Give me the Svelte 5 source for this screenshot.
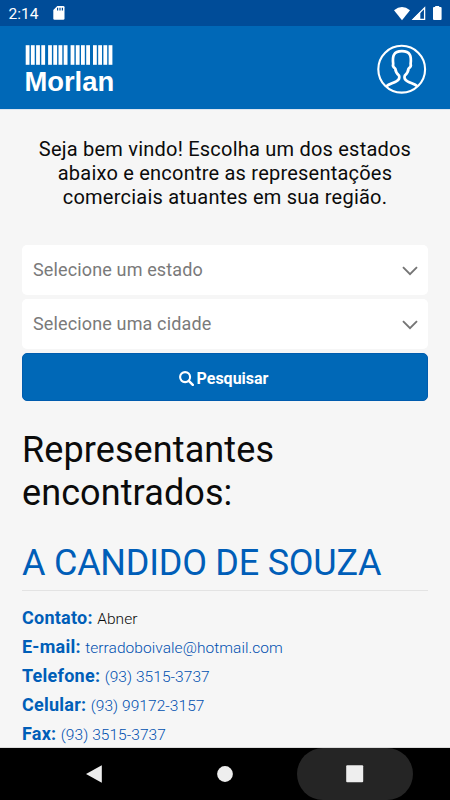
<script>
  const selects = ['Selecione um estado', 'Selecione uma cidade'];

  const barGroups = [25.7, 48.1, 70.6, 93];
  const bars = [0, 5.2, 10.4, 15.6];

  const representative = {
    name: 'A CANDIDO DE SOUZA',
    fields: [
      { label: 'Contato', value: 'Abner' },
      { label: 'E-mail', value: 'terradoboivale@hotmail.com', href: 'mailto:terradoboivale@hotmail.com' },
      { label: 'Telefone', value: '(93) 3515-3737', href: 'tel:9335153737' },
      { label: 'Celular', value: '(93) 99172-3157', href: 'tel:93991723157' },
      { label: 'Fax', value: '(93) 3515-3737', href: 'tel:9335153737' },
    ],
  };
</script>

<div class="screen">
  <div class="status-bar">
    <span class="time">2:14</span>
    <svg class="sd-card" width="12" height="14" viewBox="0 0 12 14">
      <path d="M4.3 0H10.2Q11.5 0 11.5 1.3V12.5Q11.5 13.8 10.2 13.8H1.6Q.3 13.8 .3 12.5V4Z" fill="#fff" />
      <path d="M4.6 1.7V4.4M7 1.7V4.4M9.4 1.7V4.4" stroke="#004c98" stroke-width="1.2" />
    </svg>
    <svg class="signals" width="50" height="16" viewBox="0 0 50 16">
      <path d="M0 4.2Q8 -2.4 16 4.2L8 14.2Z" fill="#fff" />
      <path d="M30.6 1.8V13.4H19.2Z" fill="none" stroke="#fff" stroke-width="1.3" />
      <path d="M26.3 5.6V13.8H18Z" fill="#fff" />
      <path d="M41.2 1V0H45.2V1H46.6Q47.6 1 47.6 2V13Q47.6 14 46.6 14H40Q39 14 39 13V2Q39 1 40 1Z" fill="#fff" />
    </svg>
  </div>

  <header class="header">
    <svg class="logo" width="116" height="83" viewBox="0 0 116 83" fill="#fff">
      {#each barGroups as group}
        {#each bars as bar}
          <rect x={group + bar} y="19.2" width="3.8" height="19.6" />
        {/each}
      {/each}
      <text class="logo-text" x="24.4" y="65" textLength="89.8" lengthAdjust="spacingAndGlyphs">Morlan</text>
    </svg>
    <svg class="profile" width="50" height="50" viewBox="0 0 50 50" fill="none" stroke="#fff">
      <circle cx="24.7" cy="25.2" r="23.4" stroke-width="2.1" />
      <path
        d="M9.5 42.2C12 40 16 39.3 19.3 37.4C22.5 35.5 22.8 33.5 22 31.5C19.5 29.4 18.5 27 18.2 24.5C16 23 15.6 21.4 16.2 20C15.2 12 16.5 7.2 24.9 7.2C33.3 7.2 34.6 12 33.6 20C34.2 21.4 33.8 23 31.6 24.5C31.3 27 30.3 29.4 27.8 31.5C27 33.5 27.3 35.5 30.5 37.4C33.8 39.3 37.8 40 40.3 42.2"
        stroke-width="2.7"
        stroke-linejoin="round"
      />
    </svg>
  </header>

  <main class="content">
    <p class="intro">
      Seja bem vindo! Escolha um dos estados<br />
      abaixo e encontre as representações<br />
      comerciais atuantes em sua região.
    </p>

    <div class="form">
      {#each selects as placeholder}
        <div class="select">
          <span>{placeholder}</span>
          <svg width="16" height="10" viewBox="0 0 16 10">
            <path d="M1 1.2L8 8.2L15 1.2" fill="none" stroke="#757575" stroke-width="1.9" />
          </svg>
        </div>
      {/each}
      <button class="search">
        <svg width="15" height="15" viewBox="0 0 15 15" fill="none" stroke="#fff">
          <circle cx="6.1" cy="6.1" r="5" stroke-width="2.1" />
          <path d="M9.8 9.8L13.8 13.8" stroke-width="2.5" stroke-linecap="round" />
        </svg>
        <span>Pesquisar</span>
      </button>
    </div>

    <h1>Representantes<br />encontrados:</h1>

    <h2>{representative.name}</h2>
    <ul class="fields">
      {#each representative.fields as field}
        <li>
          <strong>{field.label}:</strong>
          {#if field.href}
            <a href={field.href}>{field.value}</a>
          {:else}
            <span>{field.value}</span>
          {/if}
        </li>
      {/each}
    </ul>
  </main>

  <nav class="nav-bar">
    <div class="nav-item">
      <svg width="18" height="18" viewBox="0 0 18 18"><path d="M0 9L15.8 .2V17.8Z" fill="#eee" /></svg>
    </div>
    <div class="nav-item">
      <svg width="16" height="16" viewBox="0 0 16 16"><circle cx="8" cy="8" r="7.9" fill="#eee" /></svg>
    </div>
    <div class="nav-item active">
      <svg width="18" height="18" viewBox="0 0 18 18"><rect x=".2" y=".2" width="17" height="17" rx="1" fill="#eee" /></svg>
    </div>
  </nav>
</div>

<style>
  :global(body) {
    margin: 0;
  }

  .screen {
    display: flex;
    flex-direction: column;
    width: 450px;
    height: 800px;
    overflow: hidden;
    background: #f6f6f6;
    color: #0b0b0b;
    font-family: Roboto, 'Liberation Sans', sans-serif;
  }

  /* Status bar */
  .status-bar {
    display: flex;
    flex: none;
    align-items: center;
    height: 26px;
    box-sizing: border-box;
    padding: 0 0 0 8.5px;
    background: #004c98;
    color: #fff;
  }
  .time {
    width: 44.5px;
    font-size: 15.5px;
    line-height: 26px;
    padding-top: 2px;
  }
  .signals {
    margin: 1px 6px 0 auto;
  }

  /* Header */
  .header {
    display: flex;
    flex: none;
    align-items: center;
    justify-content: space-between;
    height: 83px;
    padding-right: 23px;
    background: #0068b7;
  }
  .logo-text {
    font-family: 'Liberation Sans', sans-serif;
    font-size: 27.5px;
    font-weight: 700;
  }
  .profile {
    margin-top: 3px;
  }

  /* Content */
  .content {
    flex: 1;
    min-height: 0;
    overflow: hidden;
    box-sizing: border-box;
    padding: 27px 22px 0;
    border-top: 1px solid #dbe5f0;
    border-bottom: 1px solid #dcdcdc;
  }
  .intro {
    margin: 0 0 36px;
    font-size: 20px;
    line-height: 24px;
    letter-spacing: 0.22px;
    text-align: center;
  }
  .form {
    display: flex;
    flex-direction: column;
    gap: 4px;
  }
  .select {
    display: flex;
    align-items: center;
    justify-content: space-between;
    height: 50px;
    box-sizing: border-box;
    padding: 0 10px 2px 11px;
    border-radius: 5px;
    background: #fff;
    color: #7a7a7a;
    font-size: 18px;
    letter-spacing: 0.14px;
  }
  .select svg {
    margin-top: 3px;
  }
  .search {
    display: flex;
    align-items: center;
    justify-content: center;
    gap: 3px;
    height: 48px;
    padding: 2px 3px 0 0;
    border: 1px solid #005cae;
    border-radius: 5px;
    background: #0068b7;
    color: #fff;
    font-family: inherit;
    font-size: 16px;
    font-weight: 700;
  }

  h1,
  h2 {
    margin: 0;
    font-size: 36px;
    font-weight: 400;
  }
  h1 {
    margin-top: 28px;
    line-height: 43px;
    letter-spacing: 0.1px;
  }
  h2 {
    margin-top: 27px;
    padding-bottom: 5px;
    border-bottom: 1px solid #e3e3e3;
    color: #005eb8;
    line-height: 43px;
    letter-spacing: -0.24px;
    white-space: nowrap;
  }
  .fields {
    margin: 12px 0 0;
    padding: 0;
    list-style: none;
  }
  .fields li {
    height: 29px;
    font-size: 15.5px;
    line-height: 29px;
    white-space: nowrap;
  }
  .fields strong {
    color: #005eb8;
    font-size: 18px;
    font-weight: 700;
    letter-spacing: 0.24px;
  }
  .fields a,
  .fields span {
    margin-left: 0.6px;
    font-weight: 350;
    letter-spacing: 0.06px;
  }
  .fields a {
    color: #0050b0;
    text-decoration: none;
  }

  /* Android navigation */
  .nav-bar {
    display: flex;
    flex: none;
    justify-content: center;
    gap: 14px;
    height: 52px;
    background: #000;
  }
  .nav-item {
    display: flex;
    align-items: center;
    justify-content: center;
    width: 116px;
    border-radius: 26px;
  }
  .nav-item.active {
    background: #252525;
  }
</style>
